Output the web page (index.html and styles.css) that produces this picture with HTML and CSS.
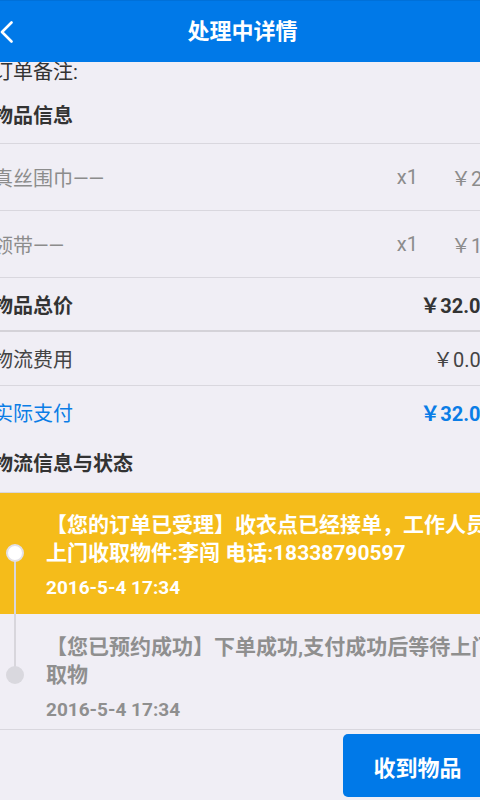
FILE: index.html
```html
<!DOCTYPE html>
<html lang="zh-CN">
<head>
<meta charset="utf-8"/>
<title>处理中详情</title>
<link rel="stylesheet" href="styles.css">
</head>
<body>
<div class="screen">
  <div class="topbar">
    <svg class="back" width="14" height="22" viewBox="0 0 14 22">
      <polyline points="11.5,1.5 2,11 11.5,20.5" fill="none" stroke="#fff" stroke-width="2.6" stroke-linecap="round" stroke-linejoin="round"/>
    </svg>
    <h1 class="title">处理中详情</h1>
  </div>

  <div class="remark">订单备注:</div>

  <div class="section-title first">物品信息</div>
  <div class="row item">
    <span class="item-name">真丝围巾——</span>
    <span class="item-qty">x1</span>
    <span class="item-price">￥20.00</span>
  </div>
  <div class="row item">
    <span class="item-name">领带——</span>
    <span class="item-qty">x1</span>
    <span class="item-price">￥12.00</span>
  </div>
  <div class="row total">
    <span>物品总价</span>
    <span>￥32.00</span>
  </div>
  <div class="row fee">
    <span>物流费用</span>
    <span>￥0.00</span>
  </div>
  <div class="row pay">
    <span>实际支付</span>
    <span>￥32.00</span>
  </div>

  <div class="section-title">物流信息与状态</div>
  <div class="steps">
    <div class="step current">
      <span class="dot"></span>
      <p class="step-text">【您的订单已受理】收衣点已经接单，工作人员上门收取物件:李闯 电话:18338790597</p>
      <p class="step-time">2016-5-4 17:34</p>
    </div>
    <div class="step">
      <span class="dot"></span>
      <p class="step-text">【您已预约成功】下单成功,支付成功后等待上门取物</p>
      <p class="step-time">2016-5-4 17:34</p>
    </div>
  </div>

  <div class="footer">
    <button class="confirm">收到物品</button>
  </div>
</div>
</body>
</html>
```

FILE: styles.css
```css
body {
    margin: 0;
    overflow: hidden;
    background-color: #f0eef5;
    font-family: Roboto, "Noto Sans CJK SC", sans-serif;
    color: #333;
}
.screen {
    width: 519px;
    margin-left: -17px;
}

/* barra superior */
.topbar {
    position: relative;
    height: 62px;
    background-color: #0079e8;
    border-top: 1px solid #0070d8;
    box-sizing: border-box;
    display: flex;
    align-items: center;
    justify-content: center;
}
.back {
    position: absolute;
    left: 17px;
    top: 20px;
}
.title {
    margin: 0;
    font-size: 22px;
    font-weight: 700;
    color: #fff;
    line-height: 28px;
}

.remark {
    padding: 0 10px;
    font-size: 20px;
    line-height: 20px;
    color: #333;
}
.section-title {
    padding: 16px 10px 18px;
    font-size: 20px;
    line-height: 20px;
    font-weight: 700;
    color: #333;
}
.section-title.first {
    padding: 24px 10px 17px;
}

/* filas */
.row {
    display: flex;
    align-items: center;
    justify-content: space-between;
    padding: 0 10px;
    font-size: 20px;
    border-top: 1px solid #d9d7de;
    white-space: nowrap;
}
.item {
    height: 66px;
    color: #8c8c8c;
}
.item-name {
    flex: 1;
}
.item-qty {
    margin-right: 33px;
}
.item-price {
    width: 41px;
}
.total {
    height: 52px;
    font-weight: 700;
    color: #333;
}
.fee {
    height: 53px;
    border-top: 2px solid #d4d2d8;
    color: #444;
}
.pay {
    height: 52px;
    color: #0a7de6;
    font-weight: 700;
}
.pay span:first-child {
    font-weight: 400;
}

/* estado */
.steps {
    border-top: 1px solid #d9d7de;
    border-bottom: 1px solid #d9d7de;
}
.step {
    position: relative;
    padding: 19px 0 8px 63px;
    color: #8f8f8f;
}
.step.current {
    padding: 18px 0 15px 63px;
    background-color: #f5bc1a;
    color: #fff;
}
.step.current::after {
    content: "";
    position: absolute;
    left: 31px;
    top: 61px;
    bottom: 0;
    width: 2px;
    background-color: #d8d6dc;
}
.step + .step::before {
    content: "";
    position: absolute;
    left: 31px;
    top: 0;
    height: 62px;
    width: 2px;
    background-color: #d8d6dc;
}
.dot {
    position: absolute;
    left: 23px;
    top: 52px;
    width: 18px;
    height: 18px;
    border-radius: 50%;
    background-color: #d9d8de;
    z-index: 1;
}
.current .dot {
    box-sizing: border-box;
    background-color: #fff;
    border: 2px solid #e2e0e8;
    top: 51px;
}
.step-text {
    margin: 0;
    font-size: 21px;
    line-height: 28px;
    font-weight: 700;
}
.step-time {
    margin: 10px 0 0;
    font-size: 19px;
    line-height: 22px;
    font-weight: 700;
}

.footer {
    display: flex;
    justify-content: flex-end;
    padding: 4px 10px 3px 0;
}
.confirm {
    width: 149px;
    height: 63px;
    background-color: #0079e8;
    color: #fff;
    border: none;
    border-radius: 5px;
    font-family: Roboto, "Noto Sans CJK SC", sans-serif;
    font-size: 22px;
    font-weight: 700;
}
```
